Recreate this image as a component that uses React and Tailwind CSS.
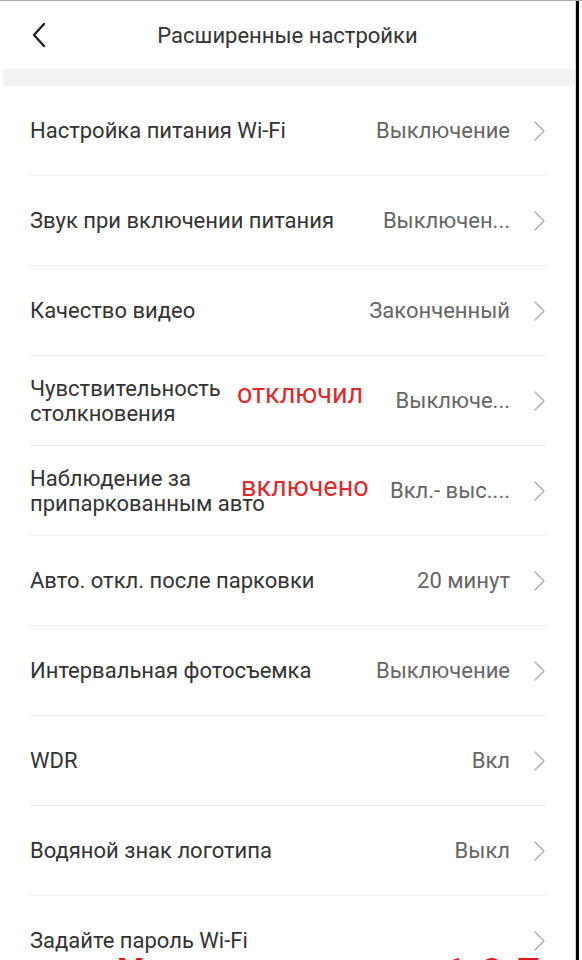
const rows = [
  { label: 'Настройка питания Wi-Fi', value: 'Выключение' },
  { label: 'Звук при включении питания', value: 'Выключен...' },
  { label: 'Качество видео', value: 'Законченный' },
  { label: ['Чувствительность', 'столкновения'], value: 'Выключе...', note: 'отключил', noteX: 'left-[207px] top-[18px]' },
  { label: ['Наблюдение за', 'припаркованным авто'], value: 'Вкл.- выс....', note: 'включено', noteX: 'left-[211px] top-[21px]' },
  { label: 'Авто. откл. после парковки', value: '20 минут' },
  { label: 'Интервальная фотосъемка', value: 'Выключение' },
  { label: 'WDR', value: 'Вкл' },
  { label: 'Водяной знак логотипа', value: 'Выкл' },
  { label: 'Задайте пароль Wi-Fi', value: '' },
];

function Chevron() {
  return (
    <svg width="14" height="22" viewBox="0 0 14 22" fill="none" stroke="#b5b5b5" strokeWidth="1.6" strokeLinecap="round" strokeLinejoin="round">
      <polyline points="3 2 12 11 3 20" />
    </svg>
  );
}

function Row({ row }) {
  const twoLine = Array.isArray(row.label);
  return (
    <div className="relative h-[90px] flex items-center border-b border-[#ececec] mr-[29px]">
      <div className="flex-1 text-[22px] leading-[25px] text-[#333]">
        {twoLine ? row.label.map((l) => <div key={l}>{l}</div>) : row.label}
      </div>
      {row.note && (
        <span className={`absolute ${row.noteX} text-[27px] text-[#e0282a]`}>{row.note}</span>
      )}
      <span className="text-[22px] text-[#666] mr-[22px]">{row.value}</span>
      <Chevron />
    </div>
  );
}

export default function App() {
  return (
    <div className="relative w-[582px] h-[960px] overflow-hidden bg-white border-t border-[#b0b0b0]" style={{ fontFamily: 'Roboto, "Noto Sans", sans-serif' }}>
      <div className="flex h-full pr-[3px]">
        <div className="flex-1 border-r border-[#d8d8d8]">
          <div className="relative h-[68px] flex items-center justify-center">
            <svg className="absolute left-[30px] top-[21px]" width="18" height="26" viewBox="0 0 18 26" fill="none" stroke="#222" strokeWidth="2.4" strokeLinecap="round" strokeLinejoin="round">
              <polyline points="14 2 4 13 14 24" />
            </svg>
            <span className="text-[22px] text-[#333]">Расширенные настройки</span>
          </div>
          <div className="h-[17px] ml-[3px] bg-[#f2f2f2]" />
          <div className="pl-[30px]">
            {rows.map((r, i) => (
              <Row key={i} row={r} />
            ))}
          </div>
        </div>
        <div className="w-[3px] bg-black" />
      </div>
      <div className="absolute left-0 top-[953px] w-full flex text-[40px] font-bold leading-none text-[#e01818]">
        <span className="ml-[118px]">У</span>
        <span className="ml-[300px] tracking-[14px]">107</span>
      </div>
    </div>
  );
}
